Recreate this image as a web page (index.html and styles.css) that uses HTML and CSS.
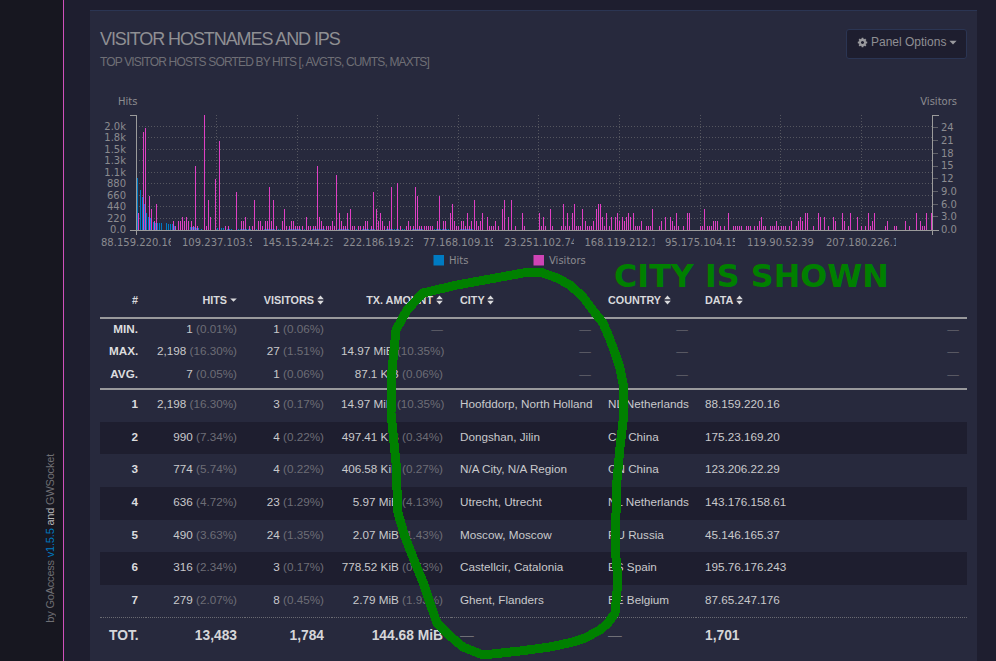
FILE: index.html
```html
<!DOCTYPE html>
<html lang="en">
<head>
<meta charset="utf-8">
<title>GoAccess</title>
<link rel="stylesheet" href="styles.css">
</head>
<body>
<svg width="0" height="0" class="defs">
  <defs>
    <symbol id="sort" viewBox="0 0 7 10"><path d="M.2 4.2 3.5 .6 6.8 4.2zM.2 5.8 3.5 9.4 6.8 5.8z"/></symbol>
    <symbol id="caret" viewBox="0 0 7 10"><path d="M.2 3.4h6.600L3.500 6.800z"/></symbol>
  </defs>
</svg>
<div class="app">
  <aside class="sidebar">
    <p class="credit">by GoAccess <a class="ver">v1.5.5</a> <b class="and">and</b> GWSocket</p>
  </aside>
  <main class="main">
    <section class="panel">
      <header class="panel-head">
        <div>
          <h2 class="title">VISITOR HOSTNAMES AND IPS</h2>
          <p class="subtitle">TOP VISITOR HOSTS SORTED BY HITS [, AVGTS, CUMTS, MAXTS]</p>
        </div>
        <button class="options">
          <svg class="gear" viewBox="0 0 1792 1792"><path d="M1152 896q0-106-75-181t-181-75-181 75-75 181 75 181 181 75 181-75 75-181zm512-109v222q0 12-8 23t-20 13l-185 28q-19 54-39 91 35 50 107 138 10 12 10 25t-9 23q-27 37-99 108t-94 71q-12 0-26-9l-138-108q-44 23-91 38-16 136-29 186-7 28-36 28h-222q-14 0-24.500-8.500t-11.500-21.500l-28-184q-49-16-90-37l-141 107q-10 9-25 9-14 0-25-11-126-114-165-168-7-10-7-23 0-12 8-23 15-21 51-66.500t54-70.500q-27-50-41-99l-183-27q-13-2-21-12.500t-8-23.500v-222q0-12 8-23t19-13l186-28q14-46 39-92-40-57-107-138-10-12-10-24 0-10 9-23 26-36 98.500-107.500t94.500-71.500q13 0 26 10l138 107q44-23 91-38 16-136 29-186 7-28 36-28h222q14 0 24.500 8.500t11.500 21.500l28 184q49 16 90 37l142-107q9-9 24-9 13 0 25 10 129 119 165 170 7 8 7 22 0 12-8 23-15 21-51 66.500t-54 70.500q26 50 41 98l183 28q13 2 21 12.500t8 23.500z"/></svg>
          <span>Panel Options</span>
          <svg class="btn-caret"><use href="#caret"/></svg>
        </button>
      </header>

      <svg class="chart" width="867" height="178" viewBox="100 92 867 178">
        <g class="grid">
          <path d="M136 126.500H933M136 137.500H933M136 149.500H933M136 160.500H933M136 172.500H933M136 183.500H933M136 195.500H933M136 206.500H933M136 218.500H933"/>
          <path d="M216.500 115V230M297.500 115V230M377.500 115V230M458.500 115V230M538.500 115V230M619.500 115V230M700.500 115V230M780.500 115V230M861.500 115V230"/>
        </g>
        <g class="bars-blue">
          <g transform="matrix(.33333 0 0 .33333 0 0)">
            <path vector-effect="non-scaling-stroke" d="M412 690V535M421 690V570M427 690V590M433 690V612M439 690V640M445 690V650M451 690V655M460 690V665M466 690V670M472 690V670M478 690V670M484 690V670M499 690V670M505 690V673M511 690V673M517 690V673M523 690V678M535 690V675M541 690V677M547 690V678M553 690V678M559 690V678M571 690V682M577 690V682M583 690V682M589 690V683M595 690V685M604 690V686M613 690V685M619 690V685M625 690V685M631 690V685M646 690V685M652 690V685M658 690V685M664 690V685M670 690V685M676 690V686M682 690V686M688 690V687M694 690V688M700 690V689"/>
          </g>
          <path class="blue-tail" d="M236 229.500H474"/>
        </g>
        <g class="bars-pink">
          <g transform="matrix(.33333 0 0 -4.26 0 230)">
            <path vector-effect="non-scaling-stroke" d="M409 0v3M415 0v4M430 0v23M436 0v24M448 0v8M454 0v5M463 0v2M469 0v6M520 0v2M526 0v1M535 0v2M541 0v2M547 0v3M553 0v2M559 0v3M565 0v2M574 0v2M580 0v1M586 0v15M592 0v1M613 0v27M619 0v1M625 0v7M631 0v3M646 0v12M658 0v21M676 0v1M685 0v1M709 0v9M724 0v2M730 0v2M736 0v3M748 0v1M757 0v1M763 0v7M775 0v2M781 0v2M787 0v1M796 0v2M802 0v2M808 0v10M814 0v2M820 0v7M829 0v1M847 0v2M853 0v5M859 0v1M868 0v1M874 0v2M880 0v2M886 0v1M892 0v1M898 0v1M907 0v1M919 0v3M925 0v1M931 0v1M940 0v1M946 0v1M952 0v15M958 0v3M964 0v2M970 0v1M979 0v1M985 0v1M991 0v1M997 0v2M1003 0v1M1009 0v13M1018 0v4M1024 0v2M1030 0v1M1036 0v1M1042 0v4M1051 0v5M1057 0v1M1063 0v1M1075 0v1M1081 0v1M1090 0v1M1096 0v2M1102 0v2M1114 0v1M1120 0v9M1130 0v5M1135 0v2M1141 0v4M1147 0v2M1153 0v1M1162 0v1M1168 0v2M1174 0v10M1192 0v11M1201 0v1M1219 0v1M1225 0v2M1231 0v1M1240 0v1M1246 0v10M1252 0v8M1258 0v1M1264 0v1M1273 0v1M1279 0v1M1285 0v1M1291 0v1M1297 0v1M1312 0v2M1318 0v8M1330 0v2M1336 0v2M1351 0v4M1357 0v6M1363 0v2M1369 0v1M1375 0v1M1384 0v2M1390 0v2M1396 0v1M1402 0v4M1408 0v1M1414 0v2M1423 0v7M1429 0v2M1435 0v1M1441 0v2M1447 0v4M1462 0v3M1468 0v1M1474 0v1M1480 0v1M1486 0v2M1495 0v1"/>
            <path vector-effect="non-scaling-stroke" transform="translate(1500 0)" d="M7 0v5M13 0v7M25 0v3M34 0v7M46 0v1M67 0v4M73 0v1M118 0v4M124 0v1M130 0v3M136 0v1M151 0v5M157 0v1M184 0v1M190 0v6M196 0v1M202 0v4M208 0v1M217 0v4M223 0v6M229 0v1M235 0v1M241 0v1M247 0v5M256 0v2M262 0v1M268 0v1M274 0v1M280 0v2M289 0v5M295 0v6M301 0v6M307 0v3M313 0v1M319 0v4M328 0v1M334 0v3M346 0v3M352 0v4M358 0v2M367 0v3M373 0v2M379 0v3M385 0v4M391 0v3M400 0v4M406 0v1M412 0v1M418 0v1M424 0v2M439 0v1M445 0v1M451 0v1M457 0v5M478 0v1M484 0v2M496 0v3M511 0v3M517 0v2M523 0v1M529 0v4M535 0v1M550 0v1M562 0v4M568 0v4M601 0v1M607 0v1M613 0v5M622 0v1M628 0v1M634 0v1M640 0v2M646 0v2M652 0v2M661 0v1M673 0v1M685 0v4M700 0v1M706 0v1M712 0v1M718 0v1M724 0v1M739 0v1M745 0v1M751 0v1M763 0v1M772 0v1M778 0v2M784 0v3M790 0v1M796 0v1M811 0v1M817 0v1M823 0v1M829 0v2M835 0v1M844 0v1M850 0v1M856 0v1M868 0v1M874 0v2M889 0v1M895 0v2M901 0v3M907 0v2M916 0v4M922 0v4M940 0v1M955 0v4M961 0v3M973 0v3M985 0v1M1000 0v3M1006 0v2M1027 0v4M1033 0v2M1045 0v1M1051 0v4M1072 0v3M1084 0v1M1096 0v1M1105 0v4M1111 0v1M1117 0v2M1123 0v4M1156 0v1M1162 0v2M1183 0v1M1189 0v1M1216 0v2M1228 0v1M1249 0v4M1261 0v2M1267 0v1M1273 0v1M1279 0v4M1294 0v4"/>
          </g>
        </g>
        <g class="axis">
          <path d="M129.500 115.500H136V235M129.500 230.500H939M938.500 115.500H932.500V235"/>
          <path class="ticks-r" d="M933 127.500H938M933 140.500H938M933 153.500H938M933 166.500H938M933 178.500H938M933 191.500H938M933 204.500H938M933 216.500H938"/>
        </g>
        <g class="labels">
          <text x="118" y="105">Hits</text>
          <text x="957" y="105" class="end">Visitors</text>
          <g class="end">
            <text x="126" y="129.500">2.0k</text><text x="126" y="141">1.8k</text><text x="126" y="153">1.5k</text><text x="126" y="164">1.3k</text><text x="126" y="176">1.1k</text><text x="126" y="186.500">880</text><text x="126" y="198.500">660</text><text x="126" y="210">440</text><text x="126" y="222">220</text><text x="126" y="233">0.0</text>
          </g>
          <text x="941" y="130.500">24</text><text x="941" y="144">21</text><text x="941" y="156.500">18</text><text x="941" y="169">15</text><text x="941" y="182">12</text><text x="941" y="195">9.0</text><text x="941" y="208">6.0</text><text x="941" y="220">3.0</text><text x="941" y="233">0.0</text>
          <svg x="101" y="235" width="70" height="14"><text y="10.500">88.159.220.16</text></svg>
          <svg x="182" y="235" width="70" height="14"><text y="10.500">109.237.103.9</text></svg>
          <svg x="262.500" y="235" width="70" height="14"><text y="10.500">145.15.244.23</text></svg>
          <svg x="343" y="235" width="70" height="14"><text y="10.500">222.186.19.23</text></svg>
          <svg x="423" y="235" width="70" height="14"><text y="10.500">77.168.109.19</text></svg>
          <svg x="504" y="235" width="70" height="14"><text y="10.500">23.251.102.74</text></svg>
          <svg x="584.500" y="235" width="70" height="14"><text y="10.500">168.119.212.1</text></svg>
          <svg x="665" y="235" width="70" height="14"><text y="10.500">95.175.104.15</text></svg>
          <text x="747" y="245.500">119.90.52.39</text>
          <svg x="826" y="235" width="70" height="14"><text y="10.500">207.180.226.1</text></svg>
          <text x="449" y="263.500">Hits</text>
          <text x="549" y="263.500">Visitors</text>
        </g>
        <rect class="key-blue" x="433.500" y="255" width="10.500" height="10.500"/>
        <rect class="key-pink" x="533.500" y="255" width="10.500" height="10.500"/>
      </svg>

      <table class="data">
        <colgroup>
          <col class="c-num"><col class="c-hits"><col class="c-vis"><col class="c-tx"><col class="c-city"><col class="c-country"><col class="c-data">
        </colgroup>
        <thead>
          <tr>
            <th class="r">#</th>
            <th class="r">HITS <svg class="ico"><use href="#caret"/></svg></th>
            <th class="r">VISITORS <svg class="ico"><use href="#sort"/></svg></th>
            <th class="r">TX. AMOUNT <svg class="ico"><use href="#sort"/></svg></th>
            <th>CITY <svg class="ico"><use href="#sort"/></svg></th>
            <th>COUNTRY <svg class="ico"><use href="#sort"/></svg></th>
            <th>DATA <svg class="ico"><use href="#sort"/></svg></th>
          </tr>
        </thead>
        <tbody class="stats">
          <tr><th class="r">MIN.</th><td class="r">1 <i>(0.01%)</i></td><td class="r">1 <i>(0.06%)</i></td><td class="r dash">—</td><td class="r dash">—</td><td class="r dash">—</td><td class="r dash">—</td></tr>
          <tr><th class="r">MAX.</th><td class="r">2,198 <i>(16.30%)</i></td><td class="r">27 <i>(1.51%)</i></td><td class="r">14.97 MiB <i>(10.35%)</i></td><td class="r dash">—</td><td class="r dash">—</td><td class="r dash">—</td></tr>
          <tr><th class="r">AVG.</th><td class="r">7 <i>(0.05%)</i></td><td class="r">1 <i>(0.06%)</i></td><td class="r">87.1 KiB <i>(0.06%)</i></td><td class="r dash">—</td><td class="r dash">—</td><td class="r dash">—</td></tr>
        </tbody>
        <tbody class="rows">
          <tr><th class="r">1</th><td class="r">2,198 <i>(16.30%)</i></td><td class="r">3 <i>(0.17%)</i></td><td class="r">14.97 MiB <i>(10.35%)</i></td><td>Hoofddorp, North Holland</td><td>NL Netherlands</td><td>88.159.220.16</td></tr>
          <tr><th class="r">2</th><td class="r">990 <i>(7.34%)</i></td><td class="r">4 <i>(0.22%)</i></td><td class="r">497.41 KiB <i>(0.34%)</i></td><td>Dongshan, Jilin</td><td>CN China</td><td>175.23.169.20</td></tr>
          <tr><th class="r">3</th><td class="r">774 <i>(5.74%)</i></td><td class="r">4 <i>(0.22%)</i></td><td class="r">406.58 KiB <i>(0.27%)</i></td><td>N/A City, N/A Region</td><td>CN China</td><td>123.206.22.29</td></tr>
          <tr><th class="r">4</th><td class="r">636 <i>(4.72%)</i></td><td class="r">23 <i>(1.29%)</i></td><td class="r">5.97 MiB <i>(4.13%)</i></td><td>Utrecht, Utrecht</td><td>NL Netherlands</td><td>143.176.158.61</td></tr>
          <tr><th class="r">5</th><td class="r">490 <i>(3.63%)</i></td><td class="r">24 <i>(1.35%)</i></td><td class="r">2.07 MiB <i>(1.43%)</i></td><td>Moscow, Moscow</td><td>RU Russia</td><td>45.146.165.37</td></tr>
          <tr><th class="r">6</th><td class="r">316 <i>(2.34%)</i></td><td class="r">3 <i>(0.17%)</i></td><td class="r">778.52 KiB <i>(0.53%)</i></td><td>Castellcir, Catalonia</td><td>ES Spain</td><td>195.76.176.243</td></tr>
          <tr><th class="r">7</th><td class="r">279 <i>(2.07%)</i></td><td class="r">8 <i>(0.45%)</i></td><td class="r">2.79 MiB <i>(1.93%)</i></td><td>Ghent, Flanders</td><td>BE Belgium</td><td>87.65.247.176</td></tr>
        </tbody>
        <tfoot>
          <tr><th class="r">TOT.</th><td class="r">13,483</td><td class="r">1,784</td><td class="r">144.68 MiB</td><td class="dash">—</td><td class="dash">—</td><td>1,701</td></tr>
        </tfoot>
      </table>
    </section>
  </main>
</div>

<svg class="scribble" width="996" height="661" viewBox="0 0 996 661">
  <path d="M523 273 540 272 557 278 570 285 583 297 595 313 603 323 609 337 615 353 620 368 623 383 624 413 620 447 617 480 615 547 618 580 615 613 608 623 600 630 585 638 573 642 550 647 520 651 483 655 463 647 450 636 437 623 430 603 423 582 418 570 405 537 398 513 397 490 396 463 391 413 392 370 396 330 407 310 423 293 457 285 490 279 523 273"/>
</svg>
<p class="note">CITY IS SHOWN</p>
</body>
</html>
```

FILE: styles.css
```css
* { box-sizing: border-box; }
html, body { margin: 0; height: 100%; overflow: hidden; }
body {
  background: #1e1e2f;
  font-family: "Liberation Sans", Arial, sans-serif;
  color: #c9c9cc;
}
.defs { position: absolute; }
.app { display: flex; height: 661px; overflow: hidden; }

.sidebar {
  width: 64px;
  flex: none;
  background: #171720;
  border-right: 1px solid #d050bb;
  display: flex;
  justify-content: flex-end;
  align-items: flex-end;
  padding: 0 5px 38px 0;
}
.credit {
  margin: 0;
  writing-mode: vertical-rl;
  transform: rotate(180deg);
  font-size: 11px;
  letter-spacing: -.2px;
  line-height: 16px;
  white-space: nowrap;
  color: #6f6f74;
}
.ver { color: #007bc3; }
.and { font-weight: normal; color: #b5b5b8; }

.main { flex: 1; padding: 10px 19px 0 26px; min-width: 0; }

.panel {
  background: #27293d;
  border-top: 1px solid #2b3553;
  padding: 0 10px 20px;
  height: 700px;
}
.panel-head {
  display: flex;
  justify-content: space-between;
  align-items: flex-start;
  padding-top: 18px;
  height: 81px;
}
.title {
  margin: 0;
  font-size: 18px;
  line-height: 20px;
  font-weight: normal;
  letter-spacing: -1.08px;
  color: #8f8f93;
}
.subtitle {
  margin: 6px 0 0;
  font-size: 12px;
  line-height: 14px;
  letter-spacing: -.84px;
  color: #6f6f76;
}
.options {
  display: flex;
  align-items: center;
  height: 30px;
  width: 121px;
  padding: 0 0 4px 10px;
  background: #1e1e2f;
  border: 1px solid #2b3553;
  border-radius: 3px;
  font: 12px "Liberation Sans", Arial, sans-serif;
  color: #8f8f93;
}
.gear { width: 11px; height: 11px; fill: #9a9a9e; margin-right: 3px; }
.btn-caret { width: 8px; height: 11px; fill: #9a9a9e; margin-left: 3px; }

.chart { display: block; font-family: "DejaVu Sans", sans-serif; margin-bottom: 13px; }
.grid path { fill: none; stroke: #55565f; stroke-width: 1; stroke-dasharray: 1 2; shape-rendering: crispEdges; }
.bars-blue path { fill: none; stroke: #007bc3; stroke-width: 1; shape-rendering: crispEdges; }
.bars-blue .blue-tail { stroke-dasharray: 1 1; }
.bars-pink path { fill: none; stroke: #df3fc3; stroke-width: 1; shape-rendering: crispEdges; }
.axis path { fill: none; stroke: #9b9b9b; stroke-width: 1; shape-rendering: crispEdges; }
.axis .ticks-r { stroke: #5f6068; }
.labels text { font-size: 10px; fill: #8b8b90; }
.labels .end text, .labels text.end { text-anchor: end; }
.key-blue { fill: #007bc3; }
.key-pink { fill: #cf44b5; }

.data {
  width: 867px;
  table-layout: fixed;
  border-collapse: collapse;
  font-size: 11.7px;
  line-height: 16px;
}
.c-num { width: 46px; }
.c-hits { width: 99px; }
.c-vis { width: 87px; }
.c-tx { width: 119px; }
.c-city { width: 148px; }
.c-country { width: 97px; }
.c-data { width: 271px; }
.data th, .data td { padding: 0 8px 0 9px; white-space: nowrap; text-align: left; font-weight: normal; }
.data .r { text-align: right; }
.data i { font-style: normal; color: #6d6d76; }
.data thead th {
  height: 35px;
  padding-top: 0;
  padding-bottom: 0;
  font-size: 10.8px;
  font-weight: bold;
  color: #d9d9dc;
  border-bottom: 2px solid #99999c;
}
.ico { width: 7px; height: 10px; fill: #d9d9dc; vertical-align: -1px; }
.stats th, .stats td { padding-bottom: 1px; }
.stats th, .rows th { font-weight: bold; color: #dcdcdf; }
.stats tr { height: 22px; }
.stats tr:last-child td, .stats tr:last-child th { border-bottom: 2px solid #99999c; padding-bottom: 2px; }
.stats tr:last-child { height: 27px; }
.rows th, .rows td { padding-bottom: 3px; }
.rows tr { height: 32.7px; }
.rows tr:nth-child(even) { background: #1e1e2f; }
.dash { color: #64646c; }
.data tfoot th, .data tfoot td {
  border-top: 1px dotted #6a6a72;
  height: 34px;
  padding-top: 2px;
  font-size: 13.8px;
  font-weight: bold;
  color: #d6d6d9;
}
.data tfoot .dash { color: #6f6f76; font-weight: normal; }

.scribble { position: absolute; left: 0; top: 0; pointer-events: none; }
.scribble path {
  fill: none;
  stroke: #008000;
  stroke-width: 9;
  stroke-linejoin: round;
  stroke-linecap: round;
  shape-rendering: crispEdges;
}
.note {
  position: absolute;
  left: 614px;
  top: 260px;
  margin: 0;
  font: bold 31.8px/32px "DejaVu Sans", sans-serif;
  color: #008000;
  white-space: nowrap;
}
```
